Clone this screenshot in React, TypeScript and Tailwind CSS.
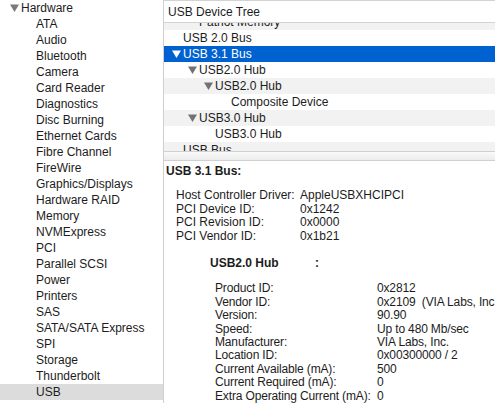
import React from 'react';

const sidebarItems = [
  'ATA', 'Audio', 'Bluetooth', 'Camera', 'Card Reader', 'Diagnostics', 'Disc Burning',
  'Ethernet Cards', 'Fibre Channel', 'FireWire', 'Graphics/Displays', 'Hardware RAID',
  'Memory', 'NVMExpress', 'PCI', 'Parallel SCSI', 'Power', 'Printers', 'SAS',
  'SATA/SATA Express', 'SPI', 'Storage', 'Thunderbolt', 'USB',
];

type TreeRow = { label: string; level: number; open?: boolean; selected?: boolean };

const treeRows: TreeRow[] = [
  { label: 'Patriot Memory', level: 2 },
  { label: 'USB 2.0 Bus', level: 1 },
  { label: 'USB 3.1 Bus', level: 1, open: true, selected: true },
  { label: 'USB2.0 Hub', level: 2, open: true },
  { label: 'USB2.0 Hub', level: 3, open: true },
  { label: 'Composite Device', level: 4 },
  { label: 'USB3.0 Hub', level: 2, open: true },
  { label: 'USB3.0 Hub', level: 3 },
  { label: 'USB Bus', level: 1 },
];

const busInfo = [
  ['Host Controller Driver:', 'AppleUSBXHCIPCI'],
  ['PCI Device ID:', '0x1242'],
  ['PCI Revision ID:', '0x0000'],
  ['PCI Vendor ID:', '0x1b21'],
];

const hubInfo = [
  ['Product ID:', '0x2812'],
  ['Vendor ID:', '0x2109  (VIA Labs, Inc.)'],
  ['Version:', '90.90'],
  ['Speed:', 'Up to 480 Mb/sec'],
  ['Manufacturer:', 'VIA Labs, Inc.'],
  ['Location ID:', '0x00300000 / 2'],
  ['Current Available (mA):', '500'],
  ['Current Required (mA):', '0'],
  ['Extra Operating Current (mA):', '0'],
];

function Triangle({ color }: { color: string }) {
  return (
    <svg width="9" height="8" viewBox="0 0 9 8" className="shrink-0">
      <path d="M0 0.5 L9 0.5 L4.5 8 Z" fill={color} />
    </svg>
  );
}

export default function App() {
  return (
    <div
      className="flex w-[495px] h-[403px] overflow-hidden bg-white text-[12px] text-[#1c1c1c]"
      style={{ fontFamily: '"Liberation Sans", Arial, sans-serif' }}
    >
      {/* Sidebar */}
      <div className="w-[164px] shrink-0 border-r border-[#cfcfcf] bg-white">
        <div className="flex items-center h-4 pl-[10px] gap-[2px] leading-4">
          <Triangle color="#7a7a7a" />
          <span>Hardware</span>
        </div>
        {sidebarItems.map((item) => (
          <div
            key={item}
            className={`h-4 leading-4 pl-[36px] whitespace-nowrap ${item === 'USB' ? 'bg-[#dcdcdc]' : ''}`}
          >
            {item}
          </div>
        ))}
      </div>

      {/* Right pane */}
      <div className="flex-1 flex flex-col min-w-0">
        <div className="h-[23px] shrink-0 border-t border-b border-[#d3d3d3] flex items-center pl-[4px] leading-none">
          USB Device Tree
        </div>

        <div className="h-[128px] shrink-0 overflow-hidden">
          <div className="-mt-[9px]">
            {treeRows.map((r, i) => (
              <div
                key={i}
                className={`h-4 flex items-center whitespace-nowrap ${
                  r.selected ? 'bg-[#0062d1] text-white' : i % 2 === 0 ? 'bg-[#f2f2f2]' : 'bg-white'
                }`}
                style={{ paddingLeft: (r.open ? 8 : 19) + (r.level - 1) * 16 }}
              >
                {r.open && (
                  <span className="mr-[2px] flex items-center">
                    <Triangle color={r.selected ? '#ffffff' : '#727272'} />
                  </span>
                )}
                <span>{r.label}</span>
              </div>
            ))}
          </div>
        </div>

        {/* splitter */}
        <div className="h-[10px] shrink-0 border-t border-b border-[#d0d0d0] bg-gradient-to-b from-[#fafafa] to-[#ececec]" />

        {/* Details */}
        <div className="flex-1 overflow-hidden whitespace-pre pl-[2px] pt-[3px]">
          <div className="font-bold leading-[14px]">USB 3.1 Bus:</div>
          <div className="mt-[11px] pl-[10px]">
            {busInfo.map(([k, v]) => (
              <div key={k} className="flex leading-[13.6px]">
                <span className="w-[124px] shrink-0">{k}</span>
                <span>{v}</span>
              </div>
            ))}
          </div>

          <div className="mt-[13px] pl-[44px] flex font-bold leading-[14px]">
            <span className="w-[105px] shrink-0">USB2.0 Hub</span>
            <span>:</span>
          </div>
          <div className="mt-[12px] pl-[49px] tracking-[-0.15px]">
            {hubInfo.map(([k, v]) => (
              <div key={k} className="flex leading-[13.4px]">
                <span className="w-[162px] shrink-0">{k}</span>
                <span>{v}</span>
              </div>
            ))}
          </div>
        </div>
      </div>
    </div>
  );
}
